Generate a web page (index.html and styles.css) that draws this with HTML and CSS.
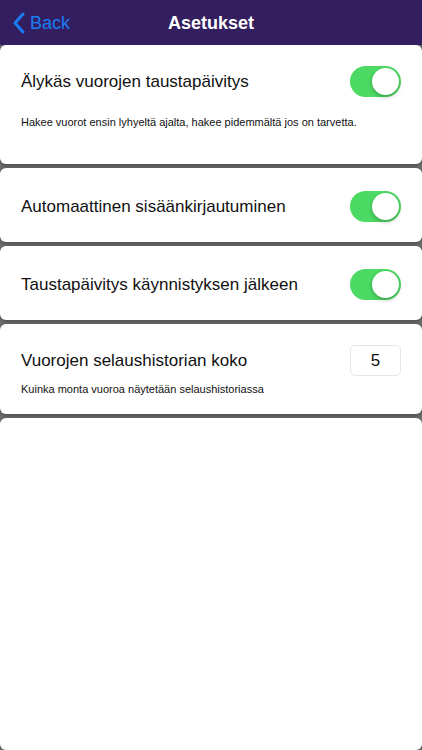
FILE: index.html
```html
<!DOCTYPE html>
<html lang="fi">
<head>
  <meta charset="UTF-8" />
  <meta name="viewport" content="width=device-width, initial-scale=1.0"/>
  <title>Asetukset</title>
  <link rel="stylesheet" href="styles.css">
</head>
<body>
  <div class="navbar">
    <a class="back" href="#">
      <svg class="chevron" width="13" height="22" viewBox="0 0 13 22">
        <path d="M11 2 L3 11 L11 20" fill="none" stroke="#1a7cf5" stroke-width="3" stroke-linecap="round" stroke-linejoin="round"/>
      </svg>
      <span>Back</span>
    </a>
    <div class="nav-title">Asetukset</div>
  </div>

  <div class="list">
    <div class="card card-first">
      <div class="row">
        <div class="label">Älykäs vuorojen taustapäivitys</div>
        <div class="switch on"><div class="knob"></div></div>
      </div>
      <div class="desc">Hakee vuorot ensin lyhyeltä ajalta, hakee pidemmältä jos on tarvetta.</div>
    </div>

    <div class="card card-small">
      <div class="row">
        <div class="label">Automaattinen sisäänkirjautuminen</div>
        <div class="switch on"><div class="knob"></div></div>
      </div>
    </div>

    <div class="card card-small">
      <div class="row">
        <div class="label">Taustapäivitys käynnistyksen jälkeen</div>
        <div class="switch on"><div class="knob"></div></div>
      </div>
    </div>

    <div class="card card-number">
      <div class="row">
        <div class="label">Vuorojen selaushistorian koko</div>
        <div class="number-input">5</div>
      </div>
      <div class="desc">Kuinka monta vuoroa näytetään selaushistoriassa</div>
    </div>

    <div class="card card-empty"></div>
  </div>
</body>
</html>
```

FILE: styles.css
```css
body {
  margin: 0;
  font-family: "Liberation Sans", Arial, sans-serif;
  background: #707070;
  color: #111;
  height: 750px;
  overflow: hidden;
  display: flex;
  flex-direction: column;
}

.navbar {
  height: 45px;
  flex-shrink: 0;
  background: #331f60;
  display: flex;
  align-items: center;
  justify-content: center;
  position: relative;
}

.back {
  position: absolute;
  left: 12px;
  top: 12px;
  display: flex;
  align-items: center;
  gap: 5px;
  color: #1a7cf5;
  text-decoration: none;
  font-size: 18px;
}

.nav-title {
  color: white;
  font-size: 18px;
  font-weight: bold;
  margin-top: 2px;
}

.list {
  flex: 1;
  display: flex;
  flex-direction: column;
  gap: 4px;
}

.card {
  background: white;
  border-radius: 6px;
  box-shadow: 0 1px 4px rgba(0, 0, 0, 0.4);
  padding: 0 21px;
  flex-shrink: 0;
}

.row {
  display: flex;
  align-items: center;
  justify-content: space-between;
}

.label {
  font-size: 17px;
}

.desc {
  font-size: 11px;
  color: #111;
}

.card-first {
  height: 119px;
  padding-top: 21px;
  box-sizing: border-box;
}

.card-first .desc {
  margin-top: 19px;
}

.card-small {
  height: 74px;
  display: flex;
  flex-direction: column;
  justify-content: center;
  box-sizing: border-box;
  padding-top: 3px;
}

.card-number {
  height: 90px;
  padding-top: 21px;
  box-sizing: border-box;
}

.card-number .desc {
  margin-top: 7px;
}

.card-empty {
  flex: 1;
}

.switch {
  width: 51px;
  height: 31px;
  border-radius: 16px;
  background: #e5e5ea;
  position: relative;
}

.switch.on {
  background: #4cd964;
}

.knob {
  position: absolute;
  top: 2px;
  left: 2px;
  width: 27px;
  height: 27px;
  border-radius: 50%;
  background: white;
  box-shadow: 0 2px 4px rgba(0, 0, 0, 0.25);
}

.switch.on .knob {
  left: 22px;
}

.number-input {
  width: 49px;
  height: 29px;
  border: 1px solid #e6e6e6;
  border-radius: 5px;
  display: flex;
  align-items: center;
  justify-content: center;
  font-size: 17px;
}
```
